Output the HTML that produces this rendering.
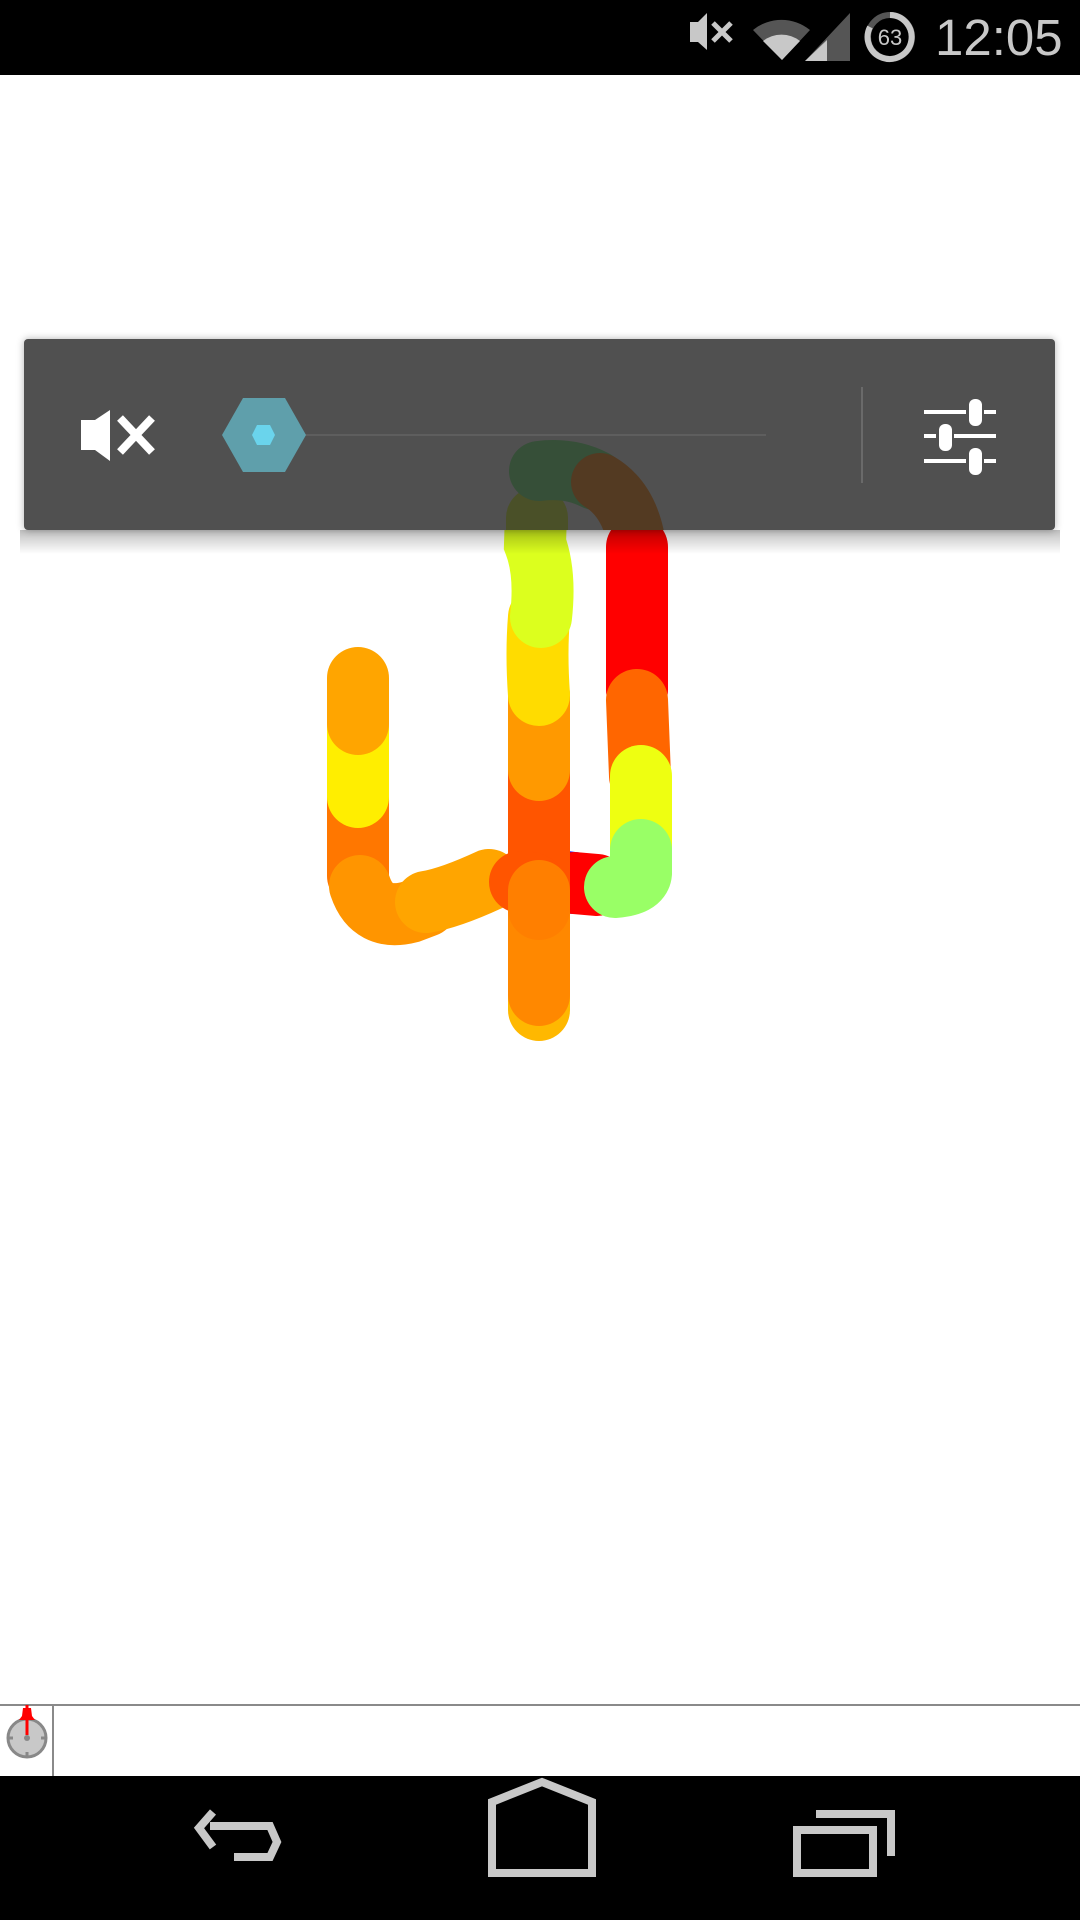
<!DOCTYPE html>
<html><head><meta charset="utf-8"><style>
html,body{margin:0;padding:0;width:1080px;height:1920px;overflow:hidden;background:#fff;position:relative;font-family:"Liberation Sans",sans-serif}
.abs{position:absolute}
</style></head><body>
<!-- status bar -->
<div class="abs" style="left:0;top:0;width:1080px;height:75px;background:#000"></div>
<svg class="abs" style="left:0;top:0" width="1080" height="75">
 <g fill="#c8c8c8">
  <polygon points="690,22 698,22 707,13 707,50 698,42 690,42"/>
  <path d="M713,23 L731,41 M731,23 L713,41" stroke="#c8c8c8" stroke-width="5"/>
  <path d="M753,30 A45,45 0 0 1 810,30 L782,60 Z" fill="#555"/>
  <path d="M763,41 A30,30 0 0 1 800,41 L782,60 Z"/>
  <polygon points="850,13 850,61 805,61" fill="#555"/>
  <polygon points="827,40 827,61 805,61"/>
  <circle cx="890" cy="37" r="22" fill="none" stroke="#555" stroke-width="6"/>
  <path d="M890,15 A22,22 0 1 1 870,27" fill="none" stroke="#c8c8c8" stroke-width="6"/>
 </g>
 <text x="890" y="45" font-size="22" fill="#c8c8c8" text-anchor="middle" font-family="Liberation Sans">63</text>
 <text x="935" y="55" font-size="51" fill="#c8c8c8" font-family="Liberation Sans">12:05</text>
</svg>

<!-- drawing -->
<svg class="abs" style="left:0;top:0" width="1080" height="1700">
 <g fill="none" stroke-linecap="round" stroke-width="62">
  <!-- right column -->
  <path d="M637,547 L637,690" stroke="#ff0000"/>
  <path d="M637,700 L640,776" stroke="#ff6600"/>
  <path d="M641,776 L641,850" stroke="#eeff11"/>
  <path d="M540,879 L574,883" stroke="#0000ff"/>
  <path d="M574,883 L597,885" stroke="#ff0000"/>
  <path d="M641,850 L641,873 Q640,885 615,887" stroke="#99ff66"/>
  <!-- center column bottom-up -->
  <path d="M539,1010 L539,971" stroke="#ffb800"/>
  <path d="M539,971 L539,770" stroke="#ff5500"/>
  <path d="M539,770 L539,695" stroke="#ff9900"/>
  <path d="M539,695 Q536,653 539,617" stroke="#ffdc00"/>
  <path d="M541,617 Q546,573 535,544 L537,481" stroke="#dcff1e"/>
  <!-- left column -->
  <path d="M358,876 L358,797" stroke="#ff7700"/>
  <path d="M358,797 L358,724" stroke="#ffee00"/>
  <path d="M358,724 L358,678" stroke="#ffa500"/>
  <path d="M360,886 Q372,922 410,912 L426,906" stroke="#ff9500"/>
  <path d="M426,902 Q450,898 489,880" stroke="#ffa500"/>
  <path d="M535,885 Q530,882 520,882" stroke="#ff5500"/>
  <path d="M539,909 L539,995" stroke="#ff8800"/>
  <path d="M539,891 L539,909" stroke="#ff7f00"/>
 </g>
</svg>

<!-- shadow under panel -->
<div class="abs" style="left:20px;top:530px;width:1040px;height:24px;background:linear-gradient(rgba(0,0,0,0.25),rgba(0,0,0,0))"></div>
<div class="abs" style="left:24px;top:339px;width:1031px;height:191px;background:#505050;border-radius:4px;box-shadow:0 0 8px rgba(0,0,0,0.3)"></div>
<svg class="abs" style="left:0;top:0" width="1080" height="560">
 <defs><clipPath id="c"><rect x="24" y="339" width="1031" height="191"/></clipPath></defs>
 <g clip-path="url(#c)" fill="none" stroke-linecap="round" stroke-width="62">
  <path d="M537,518 L537,600" stroke="#4a5028"/>
  <path d="M637,549 L637,600" stroke="#521f22"/>
  <path d="M539,471 Q570,467 595,480" stroke="#364f38" stroke-width="60"/>
  <path d="M600,482 Q630,500 637,545" stroke="#533a22" stroke-width="58"/>
 </g>
 <!-- mute icon -->
 <polygon points="81,420 95,420 110,410 110,461 95,450 81,450" fill="#fff"/>
 <path d="M120,418 L152,452 M152,418 L120,452" stroke="#fff" stroke-width="8"/>
 <!-- slider -->
 <line x1="300" y1="435" x2="766" y2="435" stroke="#5e5e5e" stroke-width="2"/>
 <polygon points="222,435 243,398 285,398 306,435 285,472 243,472" fill="#5f9fab"/>
 <polygon points="252,435 257,425 270,425 275,435 270,445 257,445" fill="#6ad4ec"/>
 <line x1="862" y1="387" x2="862" y2="483" stroke="#6a6a6a" stroke-width="2"/>
 <!-- settings -->
 <g fill="#fff">
  <rect x="924" y="410" width="42" height="4"/><rect x="984" y="410" width="12" height="4"/>
  <rect x="969" y="399" width="13" height="27" rx="6"/>
  <rect x="924" y="434" width="12" height="4"/><rect x="954" y="434" width="42" height="4"/>
  <rect x="939" y="424" width="13" height="27" rx="6"/>
  <rect x="924" y="459" width="42" height="4"/><rect x="984" y="459" width="12" height="4"/>
  <rect x="969" y="448" width="13" height="27" rx="6"/>
 </g>
</svg>

<!-- bottom strip -->
<div class="abs" style="left:0;top:1704px;width:1080px;height:2px;background:#8a8a8a"></div>
<div class="abs" style="left:52px;top:1704px;width:2px;height:72px;background:#8a8a8a"></div>
<svg class="abs" style="left:0;top:1700px" width="60" height="76">
 <circle cx="27" cy="38" r="19" fill="#c8c8c8" stroke="#888" stroke-width="3"/>
 <circle cx="27" cy="38" r="3" fill="#888"/>
 <path d="M8,38 h5 M41,38 h5 M27,52 v5" stroke="#888" stroke-width="3"/>
 <path d="M27,5 v30" stroke="#f00" stroke-width="3"/>
 <polygon points="23,8 31,8 32,16 35,20 19,20 22,16" fill="#f00"/>
</svg>

<!-- nav bar -->
<div class="abs" style="left:0;top:1776px;width:1080px;height:144px;background:#000"></div>
<svg class="abs" style="left:0;top:1776px" width="1080" height="144">
 <g fill="none" stroke="#c8c8c8" stroke-width="8">
  <path d="M210,50 L270,50 L277,66 L270,81 L234,81"/>
  <path d="M213,36 L199,52 L213,71"/>
  <path d="M492,26 L542,6 L592,26 L592,97 L492,97 Z"/>
  <path d="M797,54 L873,54 L873,97 L797,97 Z"/>
  <path d="M816,38 L891,38 L891,80"/>
 </g>
</svg>
</body></html>
